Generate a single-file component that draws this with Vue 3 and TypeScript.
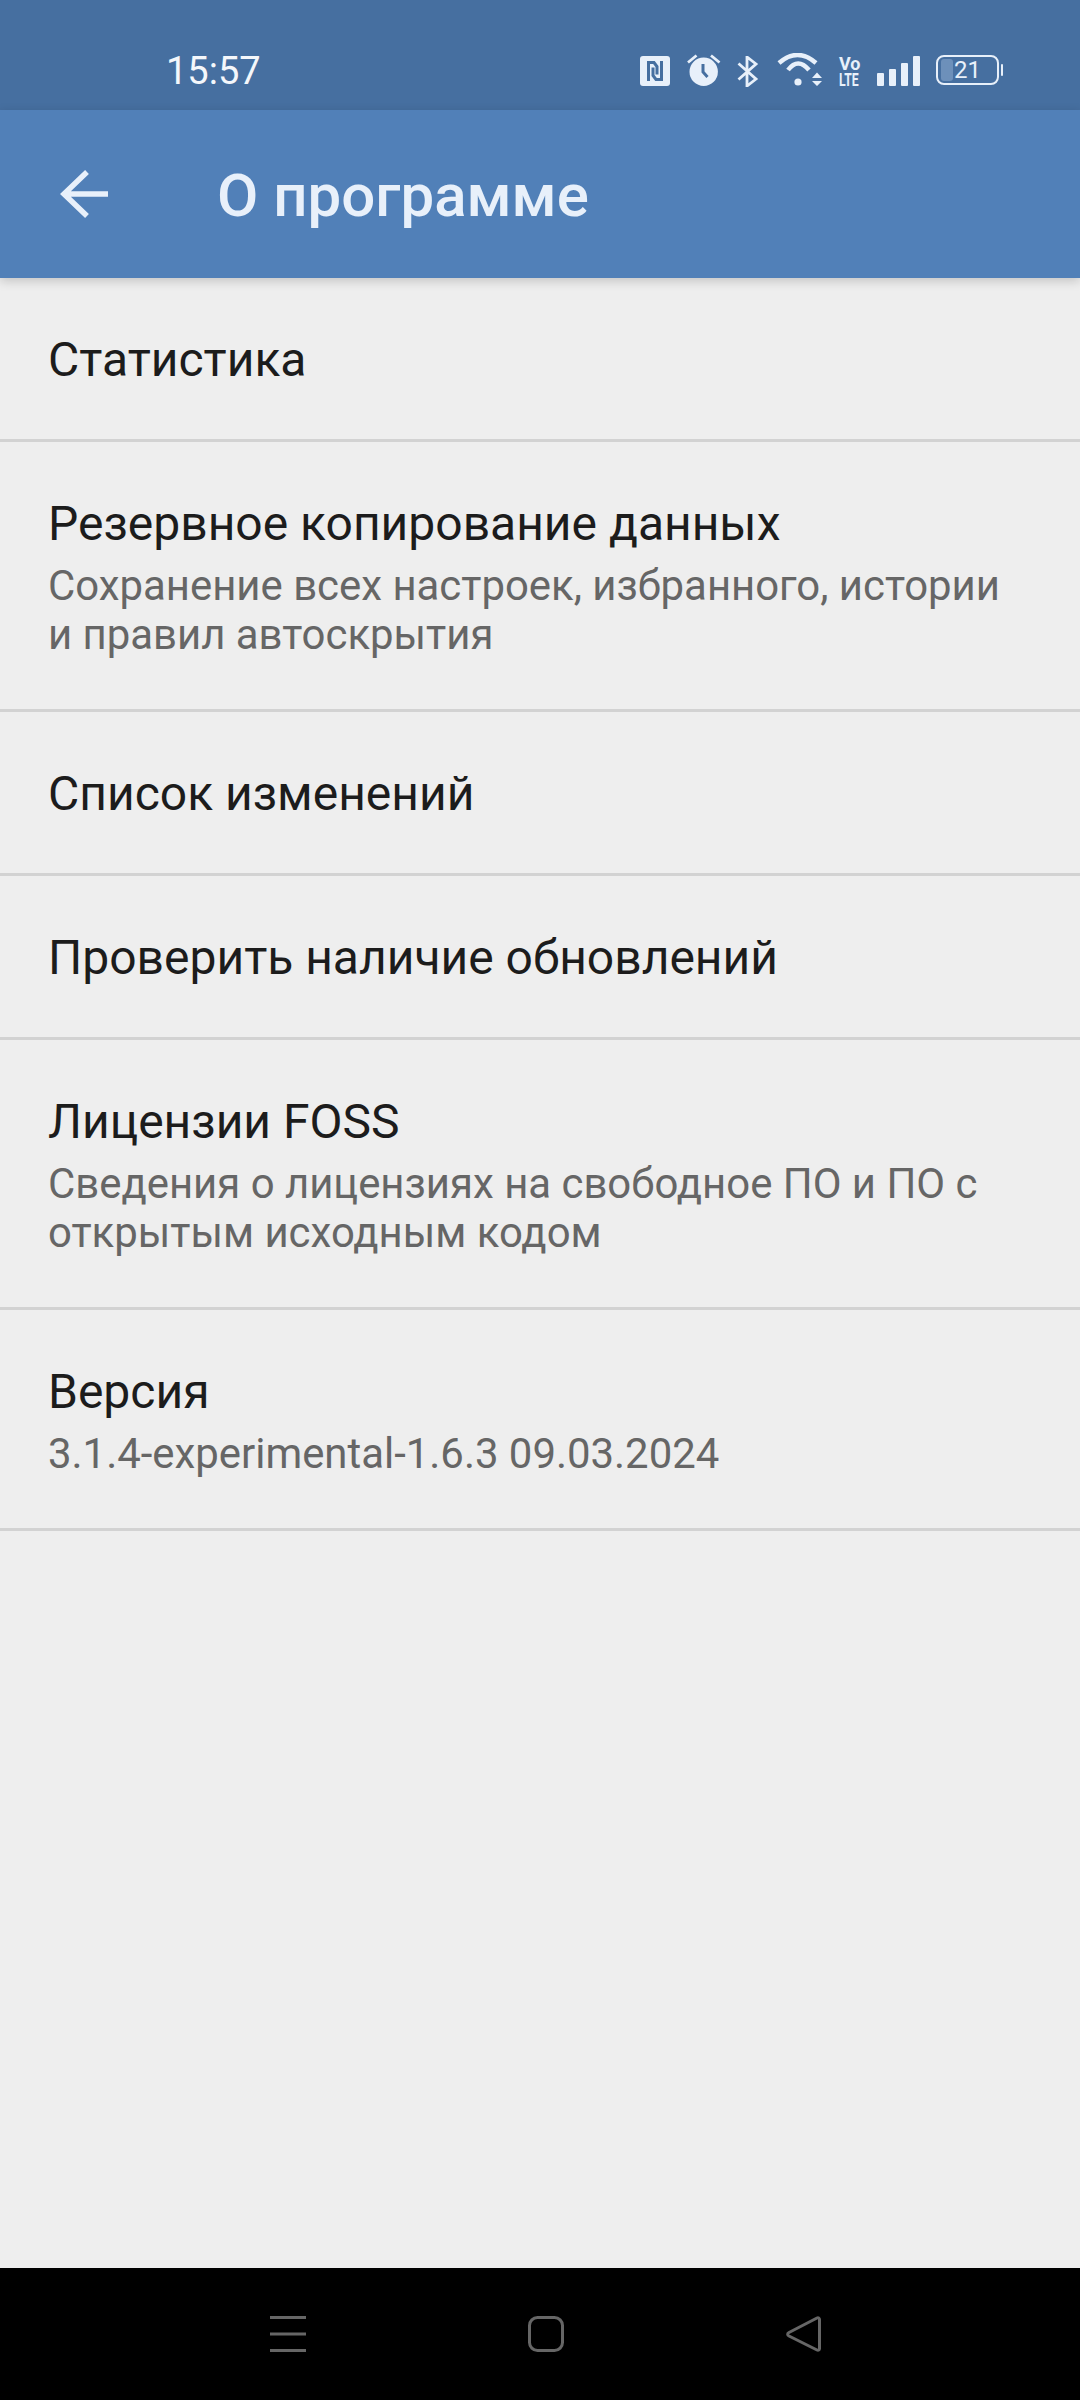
<script setup lang="ts">
interface AboutItem {
  title: string
  summary?: string[]
}

const items: AboutItem[] = [
  { title: 'Статистика' },
  {
    title: 'Резервное копирование данных',
    summary: ['Сохранение всех настроек, избранного, истории', 'и правил автоскрытия'],
  },
  { title: 'Список изменений' },
  { title: 'Проверить наличие обновлений' },
  {
    title: 'Лицензии FOSS',
    summary: ['Сведения о лицензиях на свободное ПО и ПО с', 'открытым исходным кодом'],
  },
  { title: 'Версия', summary: ['3.1.4-experimental-1.6.3 09.03.2024'] },
]
</script>

<template>
  <div class="screen">
    <div class="status-bar">
      <span class="clock">15:57</span>
      <div class="status-icons">
        <svg width="31" height="30" viewBox="0 0 31 30">
          <rect width="30" height="30" rx="3" fill="#e8f0fa" />
          <path d="M8.500 25V6.500H14l3 4v8M21.500 5v18.500H16l-3-4v-8" fill="none" stroke="#466fa0" stroke-width="3" />
        </svg>
        <svg width="34" height="32" viewBox="0 0 34 32">
          <circle cx="16.700" cy="17.800" r="14.200" fill="#e8f0fa" />
          <path d="M16 10v8l4.500 5" fill="none" stroke="#466fa0" stroke-width="3" />
          <path d="M1 8.500L9.500 1.500M32.500 8.500L24 1.500" stroke="#e8f0fa" stroke-width="2.800" />
        </svg>
        <svg class="drop" width="24" height="31" viewBox="0 0 24 31">
          <path d="M1.500 7.500L19 23l-9 7V1l9 7L1.500 23.500" fill="none" stroke="#e8f0fa" stroke-width="2.800" />
        </svg>
        <svg class="drop" width="46" height="34" viewBox="0 0 46 34">
          <path d="M2 10Q20.500 -6 39 10" fill="none" stroke="#e8f0fa" stroke-width="4.500" />
          <path d="M11 17Q21 4 32 17" fill="none" stroke="#e8f0fa" stroke-width="4.500" />
          <circle cx="21" cy="29" r="3.600" fill="#e8f0fa" />
          <path d="M35 25h10l-5-5.500zM35 28h10l-5 5z" fill="#e8f0fa" />
        </svg>
        <div class="volte"><span class="vo">Vo</span><span class="lte">LTE</span></div>
        <svg width="43" height="30" viewBox="0 0 43 30">
          <rect y="17" width="7" height="13" rx="1" fill="#e8f0fa" />
          <rect x="12" y="13" width="7" height="17" rx="1" fill="#e8f0fa" />
          <rect x="24" y="7" width="7" height="23" rx="1" fill="#e8f0fa" />
          <rect x="36" width="7" height="30" rx="1" fill="#e8f0fa" />
        </svg>
        <div class="battery">
          <div class="battery-body">
            <div class="battery-fill"></div>
            <span>21</span>
          </div>
          <div class="battery-nub"></div>
        </div>
      </div>
    </div>

    <header class="app-bar">
      <svg class="back" width="48" height="48" viewBox="0 0 48 48">
        <path d="M48 24H5M27 2L4 24l23 22" fill="none" stroke="#e8f0fa" stroke-width="5.500" />
      </svg>
      <h1 class="app-title">О программе</h1>
    </header>

    <main class="list">
      <div v-for="item in items" :key="item.title" class="row">
        <div class="row-title">{{ item.title }}</div>
        <div v-for="line in item.summary" :key="line" class="row-summary">{{ line }}</div>
      </div>
    </main>

    <nav class="nav-bar">
      <svg width="36" height="36" viewBox="0 0 36 36">
        <path d="M0 1.500h36M0 18h36M0 34.500h36" stroke="#666" stroke-width="3" fill="none" />
      </svg>
      <svg width="36" height="36" viewBox="0 0 36 36">
        <rect x="1.500" y="1.500" width="33" height="33" rx="8" fill="none" stroke="#666" stroke-width="3" />
      </svg>
      <svg width="36" height="36" viewBox="0 0 36 36">
        <path d="M33.500 3.500c0-1.500-1.200-2.200-2.500-1.500L3 16.500c-1.800 1-1.800 2.500 0 3.500l28 14c1.300.7 2.500 0 2.500-1.500z" fill="none" stroke="#666" stroke-width="3" />
      </svg>
    </nav>
  </div>
</template>

<style>
body {
  margin: 0;
}
</style>

<style scoped>
.screen {
  width: 1080px;
  height: 2400px;
  display: flex;
  flex-direction: column;
  background: #eeeeee;
  font-family: Roboto, "Liberation Sans", sans-serif;
  overflow: hidden;
}

.status-bar {
  height: 110px;
  flex: none;
  box-sizing: border-box;
  display: flex;
  align-items: flex-end;
  justify-content: space-between;
  padding: 0 77px 24px 166px;
  background: #466fa0;
  color: #f4f7fb;
}

.clock {
  font-size: 38px;
  line-height: 38px;
  margin-bottom: -4px;
}

.status-icons {
  display: flex;
  align-items: flex-end;
  gap: 16px;
}

.drop {
  margin-bottom: -1px;
}

.volte {
  width: 22px;
  height: 32px;
  margin-bottom: -2px;
  display: flex;
  flex-direction: column;
  align-items: flex-start;
  color: #e8f0fa;
  font-size: 18px;
  line-height: 16px;
  font-weight: 700;
}

.lte {
  transform: scaleX(0.68);
  transform-origin: left center;
}

.battery {
  display: flex;
  align-items: center;
  gap: 2px;
  margin-bottom: 1px;
}

.battery-body {
  position: relative;
  box-sizing: border-box;
  width: 63px;
  height: 30px;
  border: 2px solid #e8f0fa;
  border-radius: 8px;
  display: flex;
  align-items: center;
  justify-content: center;
  color: #e8f0fa;
  font-size: 24px;
  line-height: 26px;
}

.battery-fill {
  position: absolute;
  left: 3px;
  top: 2px;
  bottom: 2px;
  width: 12px;
  background: #6d90ba;
  border-radius: 3px;
}

.battery-body span {
  position: relative;
}

.battery-nub {
  width: 2px;
  height: 12px;
  background: #e8f0fa;
  border-radius: 1px;
}

.app-bar {
  position: relative;
  z-index: 1;
  height: 168px;
  flex: none;
  display: flex;
  align-items: center;
  background: #5180b8;
  box-shadow: 0 3px 10px rgba(0, 0, 0, 0.18);
}

.back {
  margin-left: 60px;
  flex: none;
}

.app-title {
  margin: 3px 0 0 109px;
  font-size: 60px;
  font-weight: 500;
  color: #e8f0fa;
}

.list {
  flex: 1;
}

.row {
  padding: 50px 48px 47px;
  border-bottom: 3px solid #d2d2d2;
}

.row-title {
  font-size: 48px;
  line-height: 64px;
  color: #1c1c1c;
}

.row-summary {
  font-size: 41.900px;
  line-height: 49px;
  color: #666666;
}

.row-title + .row-summary {
  margin-top: 5px;
}

.row-summary:last-child {
  margin-bottom: 3px;
}

.nav-bar {
  height: 132px;
  flex: none;
  display: flex;
  align-items: center;
  justify-content: center;
  gap: 222px;
  padding-left: 12px;
  box-sizing: border-box;
  background: #000;
}
</style>
